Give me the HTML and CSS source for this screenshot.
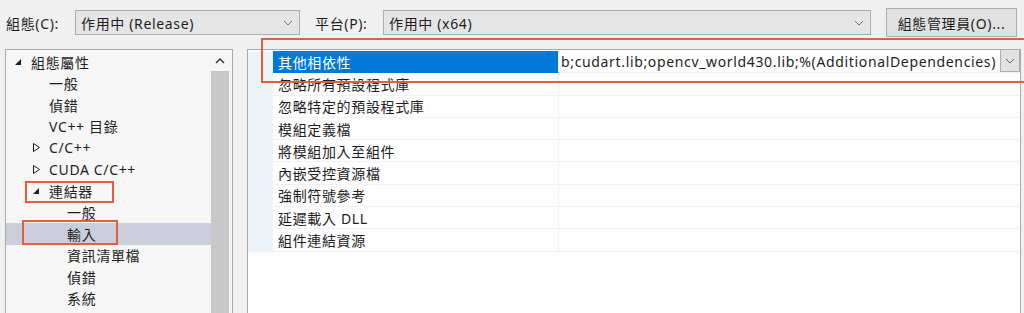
FILE: index.html
```html
<!DOCTYPE html>
<html lang="zh-Hant">
<head>
    <meta charset="UTF-8">
    <title>屬性頁</title>
    <link rel="stylesheet" href="styles.css">
</head>
<body>

    <div class="toolbar">
        <span class="label label-config">組態(C):</span>
        <div class="combo combo-config">
            <span class="combo-text">作用中 (Release)</span>
            <svg class="chev" width="10" height="6" viewBox="0 0 10 6"><path d="M1 1l4 4 4-4" fill="none" stroke="#707070" stroke-width="1"/></svg>
        </div>
        <span class="label label-platform">平台(P):</span>
        <div class="combo combo-platform">
            <span class="combo-text">作用中 (x64)</span>
            <svg class="chev" width="10" height="6" viewBox="0 0 10 6"><path d="M1 1l4 4 4-4" fill="none" stroke="#707070" stroke-width="1"/></svg>
        </div>
        <button class="btn">組態管理員(O)...</button>
    </div>

    <div class="main">
        <!-- 左側樹狀清單 -->
        <div class="tree-panel">
            <ul class="tree">
                <li class="lvl0"><span class="twisty"><svg width="8" height="8" viewBox="0 0 8 8"><path d="M7 1v6H1z" fill="#1e1e1e"/></svg></span>組態屬性</li>
                <li class="lvl1"><span class="twisty"></span>一般</li>
                <li class="lvl1"><span class="twisty"></span>偵錯</li>
                <li class="lvl1"><span class="twisty"></span>VC++ 目錄</li>
                <li class="lvl1"><span class="twisty"><svg width="9" height="11" viewBox="0 0 9 11"><path d="M1.5 1.5v8l6-4z" fill="none" stroke="#1e1e1e" stroke-width="1"/></svg></span>C/C++</li>
                <li class="lvl1"><span class="twisty"><svg width="9" height="11" viewBox="0 0 9 11"><path d="M1.5 1.5v8l6-4z" fill="none" stroke="#1e1e1e" stroke-width="1"/></svg></span>CUDA C/C++</li>
                <li class="lvl1"><span class="twisty"><svg width="8" height="8" viewBox="0 0 8 8"><path d="M7 1v6H1z" fill="#1e1e1e"/></svg></span>連結器</li>
                <li class="lvl2"><span class="twisty"></span>一般</li>
                <li class="lvl2 selected"><span class="twisty"></span>輸入</li>
                <li class="lvl2"><span class="twisty"></span>資訊清單檔</li>
                <li class="lvl2"><span class="twisty"></span>偵錯</li>
                <li class="lvl2"><span class="twisty"></span>系統</li>
            </ul>
            <div class="scrollbar">
                <div class="scroll-up"><svg width="10" height="6" viewBox="0 0 10 6"><path d="M1 5l4-4 4 4" fill="none" stroke="#404040" stroke-width="1.6"/></svg></div>
                <div class="scroll-thumb"></div>
            </div>
        </div>

        <!-- 右側屬性表 -->
        <div class="grid-panel">
            <div class="row active">
                <div class="gutter"></div>
                <div class="name">其他相依性</div>
                <div class="value">
                    <span class="value-text">b;cudart.lib;opencv_world430.lib;%(AdditionalDependencies)</span>
                    <span class="drop"><svg width="10" height="6" viewBox="0 0 10 6"><path d="M1 1l4 4 4-4" fill="none" stroke="#606060" stroke-width="1"/></svg></span>
                </div>
            </div>
            <div class="row"><div class="gutter"></div><div class="name">忽略所有預設程式庫</div><div class="value"></div></div>
            <div class="row"><div class="gutter"></div><div class="name">忽略特定的預設程式庫</div><div class="value"></div></div>
            <div class="row"><div class="gutter"></div><div class="name">模組定義檔</div><div class="value"></div></div>
            <div class="row"><div class="gutter"></div><div class="name">將模組加入至組件</div><div class="value"></div></div>
            <div class="row"><div class="gutter"></div><div class="name">內嵌受控資源檔</div><div class="value"></div></div>
            <div class="row"><div class="gutter"></div><div class="name">強制符號參考</div><div class="value"></div></div>
            <div class="row"><div class="gutter"></div><div class="name">延遲載入 DLL</div><div class="value"></div></div>
            <div class="row"><div class="gutter"></div><div class="name">組件連結資源</div><div class="value"></div></div>
        </div>
    </div>

    <!-- 標註用紅框 -->
    <div class="mark mark-deps"></div>
    <div class="mark mark-linker"></div>
    <div class="mark mark-input"></div>

</body>
</html>
```

FILE: styles.css
```css
body {
    margin: 0;
    height: 313px;
    overflow: hidden;
    background: #f0f0f0;
    color: #1e1e1e;
    font-family: "Noto Sans", "Noto Sans CJK TC", sans-serif;
    font-size: 14px;
    letter-spacing: 0.65px;
}

/* 上方工具列 */
.toolbar {
    display: flex;
    align-items: center;
    height: 45px;
    padding-left: 6px;
}

.label {
    white-space: nowrap;
}

.label-config {
    width: 69px;
}

.label-platform {
    width: 68px;
    margin-left: 15px;
}

.combo {
    display: flex;
    align-items: center;
    justify-content: space-between;
    box-sizing: border-box;
    height: 25px;
    padding: 0 6px 0 5px;
    background: #e5e5e5;
    border: 1px solid #adadad;
}

.combo-config {
    width: 225px;
}

.combo-platform {
    width: 488px;
}

.btn {
    box-sizing: border-box;
    width: 131px;
    height: 29px;
    margin-left: 15px;
    padding: 0;
    background: #e1e1e1;
    border: 1px solid #adadad;
    font: inherit;
    letter-spacing: inherit;
    color: inherit;
}

/* 主要區域 */
.main {
    display: flex;
    gap: 14px;
    margin-top: 4px;
    padding-left: 5px;
}

.tree-panel {
    display: flex;
    box-sizing: border-box;
    width: 228px;
    height: 264px;
    background: #f6f6f6;
    border: 1px solid #a9a9a9;
    border-bottom: none;
}

.tree {
    flex: 1;
    list-style: none;
    margin: 0;
    padding: 1px 0 0 0;
}

.tree li {
    display: flex;
    align-items: center;
    height: 21.5px;
    white-space: nowrap;
}

.tree .lvl0 { padding-left: 8px; }
.tree .lvl1 { padding-left: 26px; }
.tree .lvl2 { padding-left: 44px; }

.tree .selected {
    background: #cccedb;
}

.twisty {
    display: inline-flex;
    align-items: center;
    width: 17px;
    height: 100%;
}

.scrollbar {
    width: 18px;
    margin-right: 3px;
    display: flex;
    flex-direction: column;
}

.scroll-up {
    height: 21px;
    display: flex;
    align-items: center;
    justify-content: center;
}

.scroll-thumb {
    flex: 1;
    background: #c8c8c8;
}

/* 屬性表 */
.grid-panel {
    box-sizing: border-box;
    width: 774px;
    height: 264px;
    padding-top: 1px;
    background: #fdfdfd;
    border: 1px solid #a9a9a9;
    border-bottom: none;
}

.row {
    display: flex;
    box-sizing: border-box;
    height: 22.3px;
}

.gutter {
    width: 25px;
    background: #eef2f9;
}

.name,
.value {
    box-sizing: border-box;
    border-bottom: 1px solid #eef1f6;
    display: flex;
    align-items: center;
}

.name {
    width: 286px;
    padding-left: 5px;
    border-right: 1px solid #eef1f6;
}

.value {
    flex: 1;
    padding-left: 2px;
}

.row.active .name {
    background: #0078d7;
    color: #fff;
    border-bottom-color: #0078d7;
}

.row.active .value {
    background: #fff;
}

.value-text {
    flex: 1;
    white-space: nowrap;
    overflow: hidden;
}

.drop {
    display: flex;
    align-items: center;
    justify-content: center;
    box-sizing: border-box;
    width: 20px;
    height: 23px;
    margin-top: -2px;
    background: #e1e1e1;
    border: 1px solid #adadad;
}

/* 紅色標註框 */
.mark {
    position: absolute;
    box-sizing: border-box;
    border: 2px solid #e2603f;
}

.mark-deps {
    left: 261px;
    top: 38px;
    width: 763px;
    height: 45px;
    border-right: none;
}

.mark-linker {
    left: 25px;
    top: 181px;
    width: 89px;
    height: 22px;
}

.mark-input {
    left: 22px;
    top: 220px;
    width: 96px;
    height: 25px;
}
```
